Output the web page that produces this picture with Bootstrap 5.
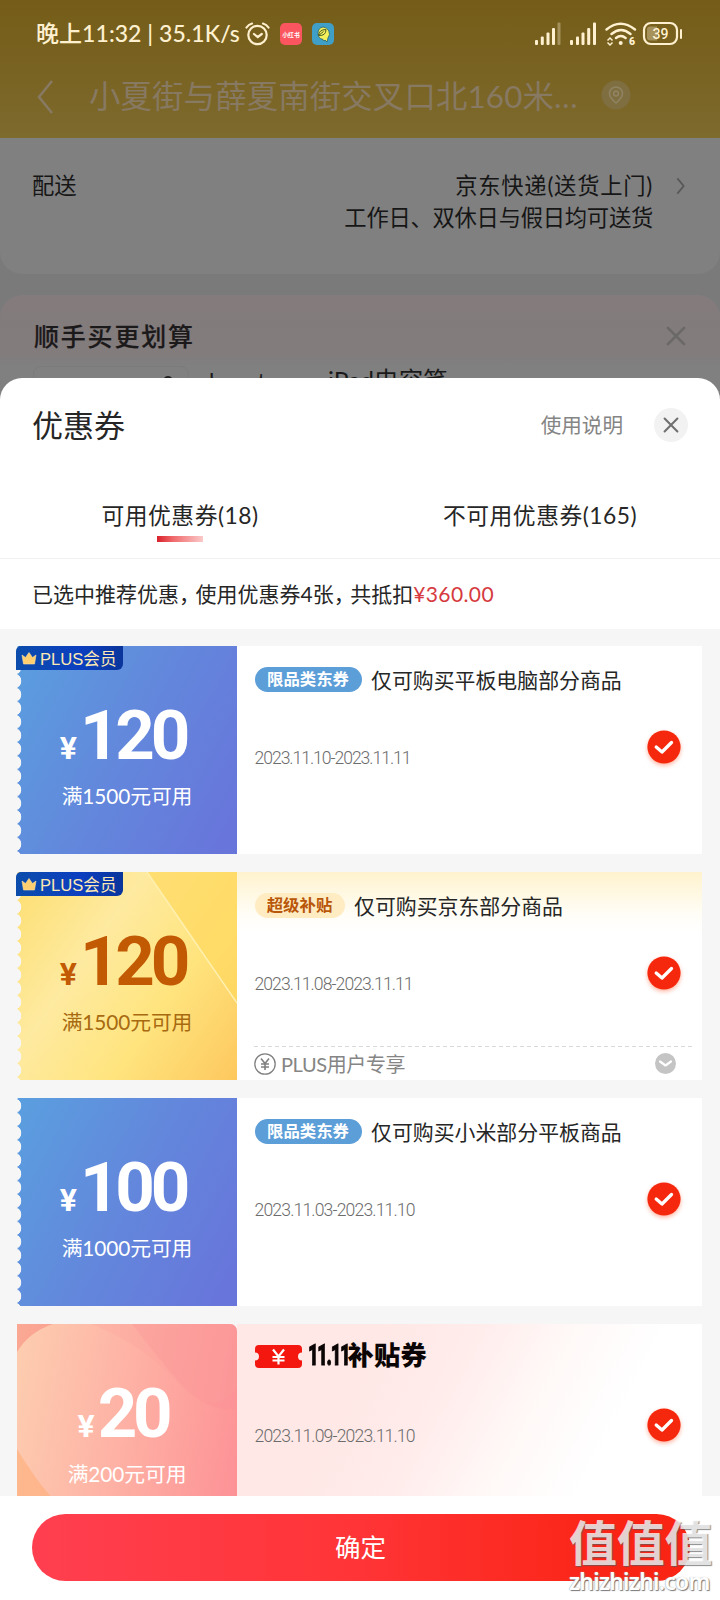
<!DOCTYPE html>
<html lang="zh-CN">
<head>
<meta charset="utf-8">
<meta name="viewport" content="width=device-width, initial-scale=1">
<title>优惠券</title>
<link href="https://cdn.jsdelivr.net/npm/bootstrap@5.3.0/dist/css/bootstrap.min.css" rel="stylesheet">
<style>
  body { background:#7a7a7a; font-family:Lato,"Noto Sans CJK SC",sans-serif; color:#262626; line-height:1; }
  .screen { width:720px; height:1600px; }
  .topbar { height:138px; background:linear-gradient(#755c18,#7d6a2d); }
  .status { height:67px; padding-left:36px; padding-right:38px; color:#fff1d0; }
  .clock { font-size:23px; font-weight:500; width:204px; letter-spacing:.05px; }
  .addr { height:60px; color:#877962; padding-left:37px; }
  .addr-text { font-size:31.4px; width:496px; margin-left:35px; letter-spacing:.15px; }
  .dim-card { background:#808080; }
  .ship { height:136px; border-radius:0 0 22px 22px; padding:32px 34px 0 32px; font-size:22.3px; line-height:32px; color:#161616; }
  .addon { margin-top:21px; height:110px; border-radius:22px 22px 0 0; background:linear-gradient(#837b7c,#827c7d 60px,#808080 70px); padding:25px 32px 0 34px; }
  .addon-title { font-size:25px; letter-spacing:1.8px; font-weight:500; line-height:32px; color:#1c191a; -webkit-text-stroke:.2px #1c191a; }
  .thumb { width:156px; height:40px; margin-left:-1px; padding-left:129px; border:1px solid #7b7b7b; border-radius:8px; }
  .goods { font-size:24.6px; color:#1a1a1a; margin:7px 0 0 20px; }
  .goods-brand { display:inline-block; width:119px; font-size:23px; }
  .sheet { height:1222px; border-radius:22px 22px 0 0; }
  .sheet-head { height:96px; padding:0 32px 2px; }
  .sheet-title { font-size:31px; }
  .help { font-size:20.6px; color:#858585; margin-right:31px; }
  .round-x { width:34px; height:34px; background:#f2f2f2; }
  .tabs { height:85px; font-size:22.8px; letter-spacing:.5px; border-bottom:1px solid #f0f0f0; }
  .tabs > div { padding-top:30px; width:360px; }
  .tab-line { width:46px; height:6px; margin:9px auto 0; background:linear-gradient(90deg,#d9202a,#f06a6c 35%,#fbc9c9); }
  .summary { height:70px; padding-left:32px; padding-bottom:2px; font-size:21px; }
  .cm { letter-spacing:-4.5px; }
  .sum-money { color:#d63a40; letter-spacing:.4px; }
  .list { height:867px; background:#f6f6f6; padding:17px 18px 0 17px; gap:18px; }
  .coupon { height:208px; flex:none; }
  .face { width:220px; color:#fff; padding-top:56px; }
  .blue .face { background:linear-gradient(118deg,#5a9fdf,#6289dc 45%,#6875db 95%); }
  .face::before { content:""; position:absolute; left:0; top:0; width:5px; height:100%; background:radial-gradient(circle at -3px 50%,#f6f6f6 7px,transparent 7.6px) 0 1px/5px 13.6px; }
  .gold .face { background:linear-gradient(125deg,#fdde70,#feeaa0 35%,#ffe47e 65%,#fdc85e); color:#c25a04; }
  .pink .face { border-top-right-radius:7px; background:linear-gradient(100deg,#fdceb0,#feb0a4 50%,#fd9095); }
  .pink .face::before { display:none; }
  .art { left:0; top:0; }
  .money { font-family:Roboto,sans-serif; font-weight:700; font-size:69px; height:70px; line-height:67px; letter-spacing:-4.2px; padding-right:8px; }
  .yuan { font-size:32px; letter-spacing:0; margin-right:3px; }
  .rule-text { font-size:20.8px; padding-left:0; margin-top:14px; letter-spacing:-.1px; }
  .gold .rule-text { color:#a86a10; }
  .vip { left:-1px; top:0; width:107px; height:24px; border-radius:5px 0 6px 0; background:linear-gradient(90deg,#0b4cab,#0c3fc0 60%,#0a359b); color:#fde9b4; font-size:16.6px; font-family:"Liberation Sans","Noto Sans CJK SC",sans-serif; padding-left:5px; gap:3px; }
  .info { padding:21px 0 0 17.5px; width:465px; }
  .gold .info { background:linear-gradient(#fff3ce,#fffdf6 42px,#fff 60px); }
  .pink .info { background:linear-gradient(118deg,#ffe8e6 25%,#ffeceb 42%,#fff8f7 58%,#fff 75%); }
  .pill { height:25px; border-radius:13px; font-size:16.4px; font-weight:700; width:107px; margin-right:9.5px; background:#5c9ed8; color:#fff; }
  .pill-gold { width:90px; background:#ffecc2; color:#b8560a; }
  .name { font-size:20.9px; padding-top:1px; }
  .date { font-family:Roboto,sans-serif; font-weight:300; font-size:17.6px; color:#6c6c6c; letter-spacing:-1.05px; margin-top:56px; height:20px; line-height:20px; }
  .date-mid { letter-spacing:-.95px; }
  .date-wide { letter-spacing:-.85px; }
  .tick { right:21.500px; top:84px; filter:drop-shadow(0 2px 2px #ffb4a0); }
  .extra { left:237px; right:9px; bottom:0; height:33px; font-size:20px; letter-spacing:-.4px; color:#858585; padding-right:17px; }
  .dash-line { left:237px; right:9px; top:174px; height:1px; background:repeating-linear-gradient(90deg,#d9d9d9 0 4px,transparent 4px 7px); }
  .ticket-row { height:25px; margin-top:-1px; margin-bottom:57px; }
  .big-name { font-size:26.2px; font-weight:900; color:#0b0505; letter-spacing:.3px; margin-left:6px; padding-bottom:2px; }
  .eleven { display:inline-block; width:40px; font-size:30px; line-height:24px; letter-spacing:-2px; font-family:Roboto,sans-serif; font-weight:900; transform:scaleX(.6); transform-origin:left; -webkit-text-stroke:1px #0b0505; }
  .foot { height:104px; padding:18px 30px 0 31.5px; }
  .confirm, .confirm:hover { height:67px; width:658px; font-size:25.5px; color:#fff; border:0; background:linear-gradient(90deg,#ff3f50,#ff3436 50%,#fa2414 90%); }
  .wm { right:6px; bottom:5px; width:145px; color:rgba(255,255,255,.75); text-shadow:1px 1px 1px rgba(90,90,90,.7); }
  .wm-cn { font-size:48px; font-weight:700; letter-spacing:-.3px; line-height:50px; }
  .wm-en { font-family:"Noto Sans",sans-serif; font-size:22.8px; font-weight:600; line-height:27px; letter-spacing:-.7px; color:#fff; text-shadow:1px 1px 1px #777,-.5px -.5px 1px #bbb; }
</style>
</head>
<body>
<svg width="0" height="0" class="position-absolute">
  <defs>
    <symbol id="check" viewBox="0 0 34 34"><circle cx="17" cy="17" r="16.6" fill="#f5270c"/><path d="M9.200 17l5.800 5 9.500-9.500" fill="none" stroke="#fff" stroke-width="3.300" stroke-linecap="round" stroke-linejoin="round"/></symbol>
    <symbol id="crown" viewBox="0 0 16 13"><path d="M1 3l3.500 2.500L8 .5l3.500 5L15 3l-1.500 9h-11z" fill="#ffcf70" stroke="#ffe1a0" stroke-width=".6"/></symbol>
    <symbol id="cross" viewBox="0 0 20 20"><path d="M2 2l16 16M18 2L2 18" fill="none" stroke="currentColor" stroke-width="2.600" stroke-linecap="round"/></symbol>
  </defs>
</svg>
<div class="screen position-relative overflow-hidden">
  <header class="topbar">
    <div class="status d-flex align-items-center">
      <span class="clock text-nowrap">晚上11:32 | 35.1K/s</span>
      <svg class="ms-1" width="26" height="24" viewBox="0 0 26 24" fill="none" stroke="#fff1d0" stroke-width="2.200" stroke-linecap="round"><circle cx="13.500" cy="13" r="9.200"/><path d="M2.500 5.500Q4.500 2.500 8 1.500M24.500 5.500Q22.500 2.500 19 1.500M10 12l3.800 3 4-3"/></svg>
      <svg style="margin-left:10px" width="22" height="22" viewBox="0 0 22 22"><rect width="22" height="22" rx="5" fill="#fb5660"/><text x="11" y="13.500" text-anchor="middle" font-size="5.800" font-weight="700" fill="#fff" font-family="Noto Sans CJK SC">小红书</text></svg>
      <svg style="margin-left:10px" width="22" height="22" viewBox="0 0 22 22"><rect width="22" height="22" rx="5" fill="#3f9fc6"/><path d="M11 4a6.800 6.800 0 0 1 5 11l-1 4-2-2-1 1-1-1.500A6.400 6.400 0 0 1 11 4z" fill="#f3f05b" stroke="#25606f" stroke-width=".8"/><path d="M6.500 12.500Q7 6.500 14 6.500q0 6.500-7.500 6zl5-4" fill="none" stroke="#4c5b25" stroke-width="1"/></svg>
      <svg class="ms-auto" width="148" height="26" viewBox="534 20 148 26" fill="#fff1d0">
        <rect x="535" y="39" width="3" height="5" rx="1"/><rect x="540.800" y="35.500" width="3" height="8.500" rx="1"/><rect x="546.500" y="31.500" width="3" height="12.500" rx="1"/><rect x="552" y="27" width="3" height="17" rx="1"/><rect x="557.500" y="21.500" width="3" height="22.500" rx="1" opacity=".35"/>
        <rect x="570" y="39" width="3" height="5" rx="1"/><rect x="576" y="35.500" width="3" height="8.500" rx="1"/><rect x="581.500" y="31.500" width="3" height="12.500" rx="1"/><rect x="587.200" y="27" width="3" height="17" rx="1"/><rect x="593" y="21.500" width="3" height="22.500" rx="1"/>
        <g fill="none" stroke="#fff1d0" stroke-width="2.400" stroke-linecap="round"><path d="M606.500 28.500q14-11.500 28.500 0M611.500 33q9.500-8 19 0M616 37q4.800-4 9.600 0"/></g>
        <circle cx="620.700" cy="42" r="2"/><path d="M607.500 39.500l2.500-2.500 2.500 2.500M607.500 41.500l2.500 2.500 2.500-2.500" fill="none" stroke="#fff1d0" stroke-width="1.500"/>
        <text x="629" y="44" font-size="10.500" font-weight="900" font-family="Roboto">6</text>
        <rect x="644" y="22" width="33" height="21" rx="7" fill="none" stroke="#fff1d0" stroke-width="2.200"/><path d="M650 25.500h7v14h-7q-3 0-3-3v-8q0-3 3-3z" opacity=".35"/>
        <rect x="680" y="28" width="2" height="10" rx="1"/><text x="660.500" y="38" text-anchor="middle" font-size="14" font-weight="500" font-family="Roboto">39</text>
      </svg>
    </div>
    <div class="addr d-flex align-items-center">
      <svg width="17" height="34" viewBox="0 0 17 34" fill="none" stroke="currentColor" stroke-width="2.600"><path d="M15 1L2 17l13 16"/></svg>
      <span class="addr-text text-nowrap">小夏街与薛夏南街交叉口北160米…</span>
      <svg style="margin-left:16px;margin-bottom:4px" width="30" height="30" viewBox="0 0 30 30" fill="none" stroke="#8f8362" stroke-width="1.600"><circle cx="15" cy="15" r="14.500" fill="#7f6e40" stroke="none"/><path d="M15 23Q8.500 17.500 8.500 13.500a6.500 6.500 0 0 1 13 0q0 4-6.500 9.500z"/><circle cx="15" cy="13.500" r="2.400"/></svg>
    </div>
  </header>
  <section class="dim-card ship d-flex justify-content-between">
    <span>配送</span>
    <div class="d-flex">
      <div class="text-end"><span style="letter-spacing:.75px">京东快递(送货上门)</span><br><span style="letter-spacing:-.25px">工作日、双休日与假日均可送货</span></div>
      <svg style="margin:7px 0 0 22px" width="11" height="18" viewBox="0 0 11 20" fill="none" stroke="#585858" stroke-width="2"><path d="M2 1.500L9 10l-7 8.500"/></svg>
    </div>
  </section>
  <section class="addon">
    <div class="d-flex justify-content-between align-items-center"><span class="addon-title">顺手买更划算</span><svg width="24" height="24" style="color:#6b6868"><use href="#cross" x="2" y="2" width="20" height="20"/></svg></div>
    <div class="d-flex" style="padding-top:10px"><div class="thumb mt-1"><svg class="d-block" style="margin-top:8px" width="10" height="8" fill="none" stroke="#222" stroke-width="2"><circle cx="5" cy="6" r="4"/></svg></div><span class="goods text-nowrap"><span class="goods-brand">hanatom</span>iPad电容笔</span></div>
  </section>

  <main class="sheet bg-white position-absolute bottom-0 start-0 w-100 overflow-hidden">
    <div class="sheet-head d-flex align-items-center">
      <span class="sheet-title me-auto">优惠券</span><span class="help">使用说明</span>
      <span class="round-x rounded-circle d-flex align-items-center justify-content-center"><svg width="16" height="16" style="color:#707070"><use href="#cross" width="16" height="16"/></svg></span>
    </div>
    <div class="tabs d-flex text-center">
      <div>可用优惠券(18)<div class="tab-line"></div></div>
      <div>不可用优惠券(165)</div>
    </div>
    <div class="summary d-flex align-items-center"><span>已选中推荐优惠<span class="cm">，</span>使用优惠券4张<span class="cm">，</span>共抵扣<span class="sum-money">¥360.00</span></span></div>

    <div class="list d-flex flex-column overflow-hidden">
      <article class="coupon blue d-flex bg-white position-relative">
        <div class="face position-relative text-center"><div class="money"><span class="yuan">¥</span>120</div><div class="rule-text">满1500元可用</div></div>
        <div class="vip position-absolute d-flex align-items-center"><svg width="16" height="13"><use href="#crown"/></svg><span class="pt-1">PLUS会员</span></div>
        <div class="info"><div class="d-flex align-items-center"><span class="pill d-flex align-items-center justify-content-center">限品类东券</span><span class="name">仅可购买平板电脑部分商品</span></div><div class="date">2023.11.10-2023.11.11</div></div>
        <svg class="tick position-absolute" width="34" height="34"><use href="#check"/></svg>
      </article>
      <article class="coupon gold d-flex bg-white position-relative">
        <div class="face position-relative text-center">
          <svg class="art position-absolute" width="220" height="208"><path d="M130 0h90v131z" fill="#ffd95f" opacity=".7"/><path d="M130 0l90 131" stroke="#fff0b0" stroke-width="1.500"/></svg>
          <div class="money position-relative"><span class="yuan">¥</span>120</div><div class="rule-text position-relative">满1500元可用</div></div>
        <div class="vip position-absolute d-flex align-items-center"><svg width="16" height="13"><use href="#crown"/></svg><span class="pt-1">PLUS会员</span></div>
        <div class="info"><div class="d-flex align-items-center"><span class="pill pill-gold d-flex align-items-center justify-content-center">超级补贴</span><span class="name">仅可购买京东部分商品</span></div><div class="date date-mid">2023.11.08-2023.11.11</div></div>
        <svg class="tick position-absolute" width="34" height="34"><use href="#check"/></svg>
        <div class="position-absolute dash-line"></div>
        <div class="extra position-absolute d-flex align-items-center">
          <svg width="22" height="22" viewBox="0 0 22 22" fill="none" stroke="#808080" stroke-width="1.300"><circle cx="11" cy="11" r="10.200"/><path d="M7 5.500l4 5 4-5M11 10.500v6.500M7 11h8M7 14h8" stroke-width="1.600"/></svg>
          <span style="margin-left:5px">PLUS用户专享</span>
          <svg class="ms-auto" width="21" height="21" viewBox="0 0 21 21"><circle cx="10.500" cy="10.500" r="10.500" fill="#c4c4c4"/><path d="M5 8.500l5.500 4 5.500-4" fill="none" stroke="#fff" stroke-width="2.200" stroke-linecap="round" stroke-linejoin="round"/></svg>
        </div>
      </article>
      <article class="coupon blue d-flex bg-white position-relative">
        <div class="face position-relative text-center"><div class="money"><span class="yuan">¥</span>100</div><div class="rule-text">满1000元可用</div></div>
        <div class="info"><div class="d-flex align-items-center"><span class="pill d-flex align-items-center justify-content-center">限品类东券</span><span class="name">仅可购买小米部分平板商品</span></div><div class="date date-wide">2023.11.03-2023.11.10</div></div>
        <svg class="tick position-absolute" width="34" height="34"><use href="#check"/></svg>
      </article>
      <article class="coupon pink d-flex position-relative">
        <div class="face position-relative text-center overflow-hidden">
          <svg class="art position-absolute" width="220" height="208"><path d="M0 0h36Q12 8 0 28z" fill="#f98d80" opacity=".6"/><path d="M115 0h105v86q-30 0-50-20T115 0z" fill="#fd8f94" opacity=".3"/><path d="M75 0q50 20 85 58t60 6V0z" fill="#fda09c" opacity=".25"/><path d="M0 125q18 30 36 50H0z" fill="#ffae78" opacity=".6"/></svg>
          <div class="money position-relative"><span class="yuan">¥</span>20</div><div class="rule-text position-relative">满200元可用</div></div>
        <div class="info"><div class="ticket-row d-flex align-items-center"><svg width="47" height="23" viewBox="0 0 47 23"><path d="M4 0h39q4 0 4 4v3.500a4 4 0 0 0 0 8V19q0 4-4 4H4q-4 0-4-4v-3.500a4 4 0 0 0 0-8V4q0-4 4-4z" fill="#f3170f"/><path d="M18 4.500l5.500 7 5.500-7M23.500 11.500v8M17.500 12h12M17.500 15.500h12" stroke="#fff" stroke-width="2.200" fill="none"/></svg><span class="big-name text-nowrap"><span class="eleven">11.11</span>补贴券</span></div><div class="date date-wide mt-0">2023.11.09-2023.11.10</div></div>
        <svg class="tick position-absolute" width="34" height="34"><use href="#check"/></svg>
      </article>
    </div>
    <footer class="foot bg-white position-relative"><button class="btn confirm rounded-pill d-flex align-items-center justify-content-center">确定</button>
      <div class="wm position-absolute text-nowrap"><div class="wm-cn">值值值</div><div class="wm-en">zhizhizhi.com</div></div>
    </footer>
  </main>
</div>
<script src="https://cdn.jsdelivr.net/npm/bootstrap@5.3.0/dist/js/bootstrap.bundle.min.js"></script>
</body>
</html>
